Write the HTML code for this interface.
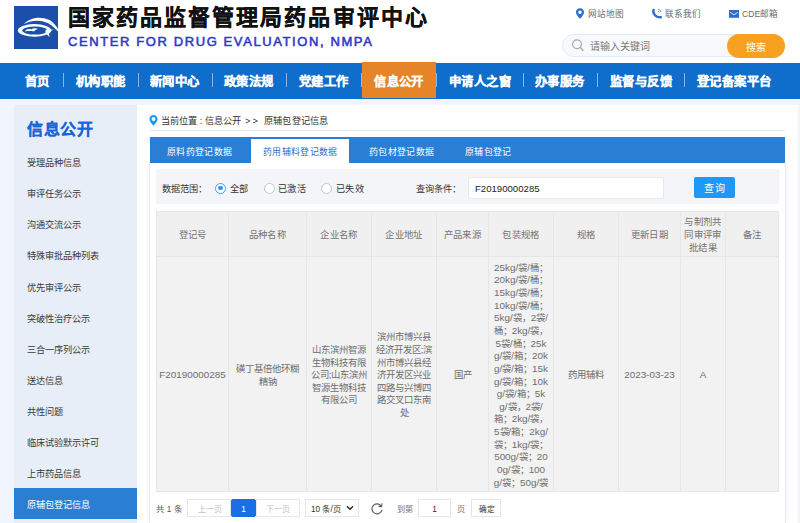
<!DOCTYPE html>
<html lang="zh-CN"><head><meta charset="utf-8">
<style>
*{margin:0;padding:0;box-sizing:border-box}
html,body{width:800px;height:523px;overflow:hidden;background:#f1f6fe;font-family:"Liberation Sans",sans-serif;color:#333}
.a{position:absolute;white-space:nowrap}
#hdr{position:absolute;left:0;top:0;width:800px;height:63px;background:#fff}
#logo{position:absolute;left:14px;top:6px;width:44px;height:43px;background:#1c4fa9}
#t1{left:68px;top:2px;font-size:22px;line-height:32px;font-weight:bold;-webkit-text-stroke:0.25px #111;letter-spacing:2.05px;color:#111}
#t2{left:68px;top:33px;font-size:13px;line-height:17px;font-weight:normal;-webkit-text-stroke:0.55px #3038c8;color:#3038c8;letter-spacing:1.6px}
.tl{font-size:8.6px;color:#6a6a6a;line-height:12px;top:8px}
#sbox{left:561.5px;top:34px;width:223.5px;height:23px;border-radius:12px;background:#f7f9fc;border:1px solid #e6e9ee}
#sbtn{left:727px;top:34px;width:58px;height:24px;border-radius:12px;background:#f8a022;color:#fff;font-size:10px;line-height:24px;padding-top:2px;text-align:center}
#nav{position:absolute;left:0;top:63px;width:800px;height:36px;background:#0f6dcb}
.ni{position:absolute;top:2px;height:34px;line-height:35px;color:#fff;font-size:12.3px;letter-spacing:0.4px;-webkit-text-stroke:0.25px #fff;font-weight:bold;white-space:nowrap}
.sep{position:absolute;top:10px;width:1px;height:14px;background:#86b6ea}
#side{position:absolute;left:14px;top:105px;width:123px;height:418px;background:#e7eef7}
.si{position:absolute;left:13px;font-size:9.2px;line-height:12px;letter-spacing:0px;color:#3a3a3a;white-space:nowrap}
#main{position:absolute;left:137px;top:105px;width:661px;height:418px;background:#fff}
#crumb{left:161px;top:114px;font-size:9.2px;line-height:14px;color:#333}
.crumb2{top:114px;font-size:9.2px;line-height:14px;color:#333}
#cline{left:150px;top:130px;width:635px;height:1px;background:#e8e8e8}
#tabs{left:150px;top:137px;width:635px;height:26px;background:#2a7fd5}
.tab{position:absolute;top:2px;height:26px;line-height:26px;font-size:8.9px;letter-spacing:0.35px;color:#fff;white-space:nowrap}
#tabact{left:251px;top:139px;width:98px;height:24px;background:#fff}
#box{left:149px;top:163px;width:637px;height:360px;border-left:1px solid #e6ebf1;border-right:1px solid #e6ebf1;box-shadow:-3px 0 4px -2px rgba(0,20,60,0.06),3px 0 4px -2px rgba(0,20,60,0.06)}
#filter{left:156px;top:169px;width:623px;height:35px;background:#f3f5f8}
.ft{font-size:9.2px;line-height:14px;color:#333;top:182px}
.radio{position:absolute;top:183px;width:11px;height:11px;border-radius:50%;border:1px solid #c2c6cc;background:#fff}
#inp{left:468px;top:177px;width:196px;height:22px;background:#fff;border:1px solid #e8e8e8;border-radius:2px}
#qbtn{left:694px;top:177px;width:41px;height:21px;background:#1f98f7;color:#fff;font-size:10px;line-height:23px;letter-spacing:1.5px;padding-left:1.5px;text-align:center;border-radius:2px}
table{position:absolute;left:156px;top:211px;border-collapse:collapse;table-layout:fixed;background:#f2f2f2}
td,th{border:1px solid #e6e6e6;text-align:center;vertical-align:middle;font-weight:normal;font-size:9.4px;line-height:12.65px;color:#6e6e6e;white-space:nowrap;padding:0}
.l{font-size:9.9px}
th{height:45px;background:#f0f0f0;color:#737373;letter-spacing:0.3px;padding-top:1px;line-height:13px}
td{height:235px;padding-top:3px}
.pg{position:absolute;top:499px;height:18px;border:1px solid #e6e6e6;background:#fff;font-size:8.2px;line-height:19px;text-align:center;color:#c4c4c4}
.pt{top:504px;font-size:8.2px;line-height:12px}
</style></head><body>
<div id="hdr">
  <div id="logo"><svg width="48" height="43" viewBox="0 0 48 43" style="overflow:visible">
    <path d="M9.8 18.2 C15 12 26 9.5 35 13.8 C40 16.5 44 21.5 46.8 28.5 C42.5 23.5 38.5 19.5 34 17.2 C26 13.2 16 14.2 9.8 18.2 Z" fill="#fff"/>
    <ellipse cx="20.5" cy="24.4" rx="16.6" ry="6.3" fill="#fff"/>
    <ellipse cx="20.9" cy="24.6" rx="12.6" ry="4.0" fill="#1c4fa9"/>
    <path d="M31.5 23.8 L39.5 23.6 C37 24.8 35.6 26 35 27.2 C35 28.5 35.2 29.8 35.8 31 C33.8 29.5 32.6 28 31.5 27 Z" fill="#fff"/>
    <path d="M11.2 25.4 C11.8 23.4 14.5 22.5 17.2 23.4 C18.8 22.2 21.5 21.9 24.2 23 C22.2 23.3 20.8 24.3 19.8 25.5 C17.8 24.9 14 24.9 11.2 25.4 Z" fill="#fff"/>
  </svg></div>
  <div id="t1" class="a">国家药品监督管理局药品审评中心</div>
  <div id="t2" class="a">CENTER FOR DRUG EVALUATION, NMPA</div>
  <svg class="a" style="left:575px;top:8px" width="10" height="11" viewBox="0 0 10 11"><path d="M5 0.3C2.6 0.3 0.9 2.1 0.9 4.3C0.9 6.9 5 10.8 5 10.8C5 10.8 9.1 6.9 9.1 4.3C9.1 2.1 7.4 0.3 5 0.3Z M5 2.4A1.8 1.8 0 1 0 5 6A1.8 1.8 0 1 0 5 2.4Z" fill="#2d6fcf" fill-rule="evenodd"/></svg>
  <div class="a tl" style="left:588px">网站地图</div>
  <svg class="a" style="left:651px;top:8px" width="12" height="11" viewBox="0 0 12 11"><path d="M2.6 2 Q1.6 5.2 4.4 7.6 Q7 9.9 9.8 9.2" stroke="#2d6fcf" stroke-width="2.5" stroke-linecap="round" fill="none"/><path d="M7 1.4 A3.2 3.2 0 0 1 10 4.2" stroke="#5b8fdc" stroke-width="0.9" fill="none"/><path d="M6.7 3.2 A1.5 1.5 0 0 1 8.1 4.5" stroke="#5b8fdc" stroke-width="0.9" fill="none"/></svg>
  <div class="a tl" style="left:665px">联系我们</div>
  <svg class="a" style="left:729px;top:10px" width="10" height="8" viewBox="0 0 10 8"><rect x="0" y="0" width="10" height="7.8" fill="#2d6fcf"/><path d="M1.2 2.3L5 4.8L8.8 2.3" stroke="#cfe3fb" stroke-width="1" fill="none"/></svg>
  <div class="a tl" style="left:742px">CDE邮箱</div>
  <div id="sbox" class="a"></div>
  <svg class="a" style="left:571px;top:38px" width="14" height="14" viewBox="0 0 14 14"><circle cx="6" cy="6.3" r="4.4" stroke="#a8a8a8" stroke-width="1.3" fill="none"/><path d="M9.3 9.6L12.3 12.8" stroke="#a8a8a8" stroke-width="1.4"/></svg>
  <div class="a" style="left:590px;top:39.5px;font-size:10px;line-height:14px;color:#787878">请输入关键词</div>
  <div id="sbtn" class="a">搜索</div>
</div>
<div id="nav">
  <div class="ni" style="left:25px">首页</div>
  <div class="sep" style="left:63px"></div>
  <div class="ni" style="left:76px">机构职能</div>
  <div class="sep" style="left:138px"></div>
  <div class="ni" style="left:150px">新闻中心</div>
  <div class="sep" style="left:212px"></div>
  <div class="ni" style="left:224px">政策法规</div>
  <div class="sep" style="left:286px"></div>
  <div class="ni" style="left:299px">党建工作</div>
  <div class="sep" style="left:361px"></div>
  <div style="position:absolute;left:362px;top:-1px;width:74px;height:36px;background:#e6842a"></div><div class="ni" style="left:362px;width:74px;text-align:center">信息公开</div>
  <div class="sep" style="left:436px"></div>
  <div class="ni" style="left:449px">申请人之窗</div>
  <div class="sep" style="left:523px"></div>
  <div class="ni" style="left:535px">办事服务</div>
  <div class="sep" style="left:597px"></div>
  <div class="ni" style="left:610px">监督与反馈</div>
  <div class="sep" style="left:684px"></div>
  <div class="ni" style="left:697px">登记备案平台</div>
</div>
<div id="side">
  <div class="a" style="left:13px;top:14px;font-size:16px;line-height:22px;font-weight:bold;letter-spacing:0.7px;-webkit-text-stroke:0.1px #1565dc;color:#1565dc">信息公开</div>
  <div class="si" style="top:52px">受理品种信息</div>
  <div class="si" style="top:83px">审评任务公示</div>
  <div class="si" style="top:114px">沟通交流公示</div>
  <div class="si" style="top:145px">特殊审批品种列表</div>
  <div class="si" style="top:176.6px">优先审评公示</div>
  <div class="si" style="top:207.6px">突破性治疗公示</div>
  <div class="si" style="top:238.6px">三合一序列公示</div>
  <div class="si" style="top:270px">送达信息</div>
  <div class="si" style="top:300.5px">共性问题</div>
  <div class="si" style="top:331.6px">临床试验默示许可</div>
  <div class="si" style="top:362.7px">上市药品信息</div>
  <div class="a" style="left:0;top:383px;width:123px;height:31px;background:#2a7fd4"></div>
  <div class="si" style="top:394.4px;color:#fff">原辅包登记信息</div>
</div>
<div id="main"></div>
<svg class="a" style="left:149px;top:115px" width="9" height="11" viewBox="0 0 9 11"><path d="M4.5 0.1C2.1 0.1 0.4 1.9 0.4 4.1C0.4 6.7 4.5 10.9 4.5 10.9C4.5 10.9 8.6 6.7 8.6 4.1C8.6 1.9 6.9 0.1 4.5 0.1Z M4.5 2.1A1.9 1.9 0 1 0 4.5 5.9A1.9 1.9 0 1 0 4.5 2.1Z" fill="#1a9af6" fill-rule="evenodd"/></svg>
<div id="crumb" class="a">当前位置</div><div class="a crumb2" style="left:199.8px">:</div><div class="a crumb2" style="left:205px">信息公开</div><div class="a crumb2" style="left:245px">&gt;</div><div class="a crumb2" style="left:252.5px">&gt;</div><div class="a crumb2" style="left:264px;letter-spacing:0.2px">原辅包登记信息</div>
<div id="cline" class="a"></div>
<div id="tabs" class="a">
  <div class="tab" style="left:17px">原料药登记数据</div>
  <div class="tab" style="left:219px">药包材登记数据</div>
  <div class="tab" style="left:315px">原辅包登记</div>
</div>
<div id="tabact" class="a"><div class="tab" style="left:12px;top:0px;color:#2a6fc9">药用辅料登记数据</div></div>
<div id="box" class="a"></div>
<div id="filter" class="a"></div>
<div class="a ft" style="left:162px">数据范围：</div>
<div class="radio" style="left:215px;top:182.5px;border-color:#409eff"><div style="position:absolute;left:2.25px;top:2.25px;width:4.5px;height:4.5px;border-radius:50%;background:#2f95ff"></div></div>
<div class="a ft" style="left:230px;letter-spacing:0.4px">全部</div>
<div class="radio" style="left:264px"></div>
<div class="a ft" style="left:278px;letter-spacing:0.4px">已激活</div>
<div class="radio" style="left:321px"></div>
<div class="a ft" style="left:336px;letter-spacing:0.4px">已失效</div>
<div class="a ft" style="left:416px">查询条件：</div>
<div id="inp" class="a"></div>
<div class="a ft" style="left:475px;color:#222;font-size:9.6px">F20190000285</div>
<div id="qbtn" class="a">查询</div>
<table>
<colgroup><col style="width:72px"><col style="width:78px"><col style="width:65px"><col style="width:65px"><col style="width:52px"><col style="width:65px"><col style="width:65px"><col style="width:62px"><col style="width:45px"><col style="width:53px"></colgroup>
<tr><th>登记号</th><th>品种名称</th><th>企业名称</th><th>企业地址</th><th>产品来源</th><th>包装规格</th><th>规格</th><th>更新日期</th><th>与制剂共<br>同审评审<br>批结果</th><th>备注</th></tr>
<tr><td><span class="l">F20190000285</span></td><td>磺丁基倍他环糊<br>精钠</td><td>山东滨州智源<br>生物科技有限<br>公司;山东滨州<br>智源生物科技<br>有限公司</td><td>滨州市博兴县<br>经济开发区;滨<br>州市博兴县经<br>济开发区兴业<br>四路与兴博四<br>路交叉口东南<br>处</td><td>国产</td><td><span class="l">25kg/</span>袋/桶；<br><span class="l">20kg/</span>袋/桶；<br><span class="l">15kg/</span>袋/桶；<br><span class="l">10kg/</span>袋/桶；<br><span class="l">5kg/</span>袋，<span class="l">2</span>袋/<br>桶；<span class="l">2kg/</span>袋，<br><span class="l">5</span>袋/桶；<span class="l">25k</span><br><span class="l">g/</span>袋/箱；<span class="l">20k</span><br><span class="l">g/</span>袋/箱；<span class="l">15k</span><br><span class="l">g/</span>袋/箱；<span class="l">10k</span><br><span class="l">g/</span>袋/箱；<span class="l">5k</span><br><span class="l">g/</span>袋，<span class="l">2</span>袋/<br>箱；<span class="l">2kg/</span>袋，<br><span class="l">5</span>袋/箱；<span class="l">2kg/</span><br>袋；<span class="l">1kg/</span>袋；<br><span class="l">500g/</span>袋；<span class="l">20</span><br><span class="l">0g/</span>袋；<span class="l">100</span><br><span class="l">g/</span>袋；<span class="l">50g/</span>袋</td><td>药用辅料</td><td><span class="l">2023-03-23</span></td><td><span class="l">A</span></td><td></td></tr>
</table>
<div class="a pt" style="left:156px;color:#555;letter-spacing:0.2px">共 1 条</div>
<div class="pg" style="left:187px;width:44px;padding-left:1px">上一页</div>
<div class="pg" style="left:231px;width:25px;background:#1b6fe4;border-color:#1b6fe4;color:#fff;border-radius:2px">1</div>
<div class="pg" style="left:256px;width:44px">下一页</div>
<div class="pg" style="left:305px;width:54px;color:#333;text-align:left;padding-left:5px">10 条/页</div>
<svg class="a" style="left:346px;top:505px" width="8" height="6" viewBox="0 0 8 6"><path d="M1 1.2L4 4.3L7 1.2" stroke="#222" stroke-width="1.3" fill="none"/></svg>
<svg class="a" style="left:370px;top:502px" width="14" height="13" viewBox="0 0 14 13"><path d="M11.2 4.2A5 5 0 1 0 11.9 7.8" stroke="#555" stroke-width="1.1" fill="none"/><path d="M12 1.3L11.6 4.6L8.4 4.3" stroke="#555" stroke-width="1.1" fill="none"/></svg>
<div class="a pt" style="left:397px;color:#777">到第</div>
<div class="pg" style="left:418px;width:33px;color:#333">1</div>
<div class="a pt" style="left:457px;color:#777">页</div>
<div class="pg" style="left:471px;width:30px;color:#333;font-size:7.6px;padding-left:1px">确定</div>
</body></html>
